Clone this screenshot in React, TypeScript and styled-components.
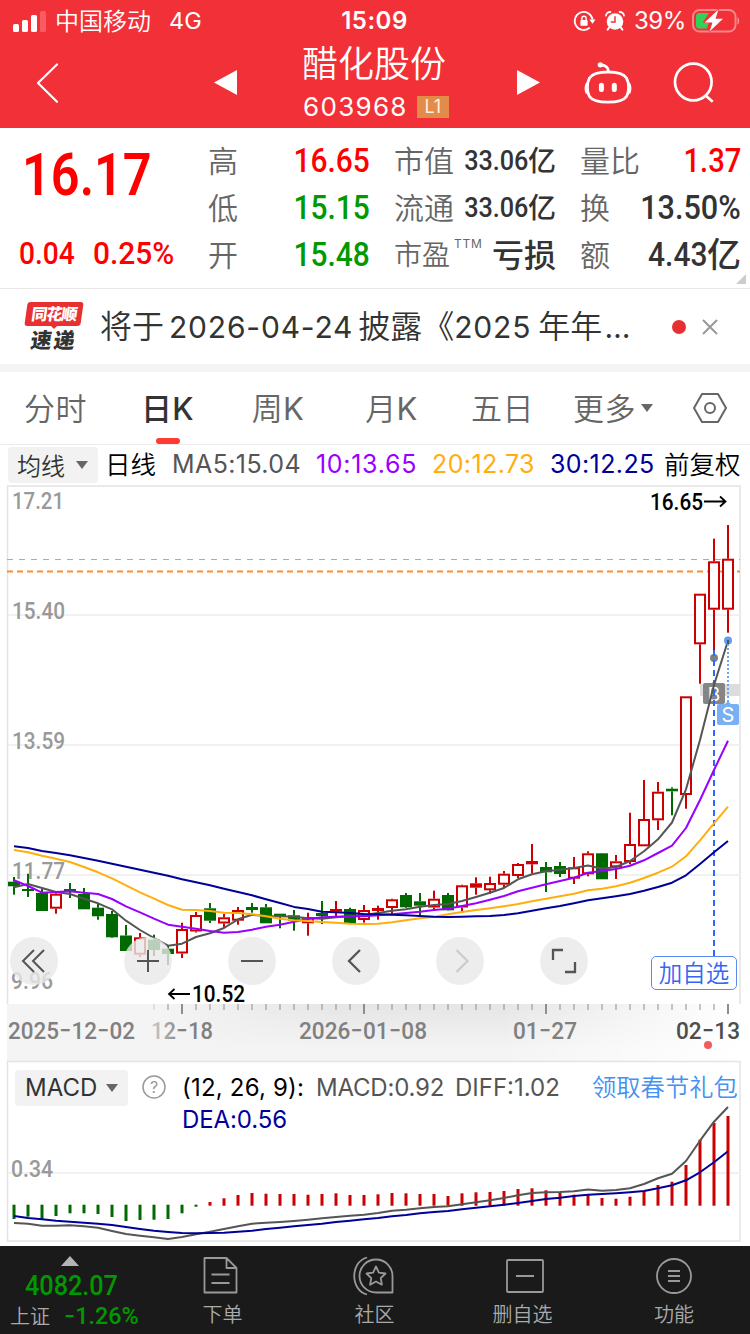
import React from "react";
import styled, { createGlobalStyle } from "styled-components";

const SANS = `Inter, "Noto Sans CJK SC", sans-serif`;
const CJK = `"Noto Sans CJK SC", Inter, sans-serif`;
const DIN = `Roboto, "Noto Sans CJK SC", sans-serif`;

const Global = createGlobalStyle`
  * { box-sizing: border-box; }
  body { margin: 0; background: #fff; font-family: ${SANS}; }
  svg { display: block; overflow: visible; }
  svg text { white-space: pre; }
`;

const Screen = styled.main`
  width: 750px;
  height: 1334px;
  overflow: hidden;
  display: flex;
  flex-direction: column;
  background: #fff;
`;

/* ---------- header ---------- */

const Header = styled.header`
  height: 128px;
  flex: none;
  background: #f23038;
  color: #fff;
`;

const StatusBar = styled.div`
  height: 40px;
  display: grid;
  grid-template-columns: 1fr auto 1fr;
  align-items: center;
  padding: 0 10px 0 13px;
`;

const StatusGroup = styled.div<{ $end?: boolean }>`
  display: flex;
  align-items: center;
  justify-content: ${(p) => (p.$end ? "flex-end" : "flex-start")};
`;

const Carrier = styled.span`
  height: 40px;
  margin-left: 9px;
  font: 350 24px/37px ${CJK};
`;

const Network = styled.span`
  margin-left: 18px;
  font: 400 23.5px/42px ${SANS};
`;

const Clock = styled.span`
  font: 600 24px/42px ${SANS};
  letter-spacing: 0.5px;
  margin-left: -4px;
`;

const Battery = styled.span`
  font: 400 24px/42px ${SANS};
  letter-spacing: -0.4px;
  margin: 0 6px 0 9px;
`;

const TitleBar = styled.div`
  height: 88px;
  display: grid;
  grid-template-columns: 214px 63px 198px 110px 1fr;
`;

const Slot = styled.div<{ $left?: number; $top?: number }>`
  padding: ${(p) => p.$top ?? 0}px 0 0 ${(p) => p.$left ?? 0}px;
`;

const StockName = styled.div`
  height: 46px;
  padding-right: 4px;
  font: 350 36px/42px ${CJK};
  text-align: center;
`;

const StockCode = styled.div`
  display: flex;
  align-items: center;
  padding-left: 26px;
  height: 42px;
  font: 400 26px/42px ${SANS};
  letter-spacing: 1.3px;
`;

const LevelTag = styled.span`
  width: 32px;
  height: 22px;
  margin-left: 9px;
  background: #e38b49;
  font: 400 18px/22px ${SANS};
  text-align: center;
  color: #fdf0e4;
  letter-spacing: 0;
`;

const HeaderActions = styled.div`
  display: flex;
  gap: 42px;
  padding-top: 21px;
`;

/* ---------- quote ---------- */

const Quote = styled.section`
  position: relative;
  height: 161px;
  flex: none;
  display: grid;
  grid-template-columns: 208px 186px 186px 161px;
  border-bottom: 1px solid #e8e8e8;
`;

const Num = styled.span<{ $size: number; $sx?: number; $origin?: string; $color?: string; $weight?: number }>`
  display: inline-block;
  font-family: ${DIN};
  font-size: ${(p) => p.$size}px;
  font-weight: ${(p) => p.$weight ?? 500};
  color: ${(p) => p.$color ?? "inherit"};
  transform: scaleX(${(p) => p.$sx ?? 0.88});
  transform-origin: ${(p) => p.$origin ?? "right"} center;
  white-space: nowrap;
`;

const PriceCol = styled.div`
  position: relative;
`;

const LastPrice = styled.div`
  padding: 18px 0 0 22px;
  line-height: 58px;
  height: 101px;
`;

const Change = styled.div`
  display: grid;
  grid-template-columns: 74px 1fr;
  padding-left: 19px;
  line-height: 48px;
`;

const StatCol = styled.dl<{ $width: number }>`
  margin: 0;
  padding-top: 9px;
  width: ${(p) => p.$width}px;
`;

const Stat = styled.div`
  height: 47px;
  display: flex;
  justify-content: space-between;
  align-items: center;
  line-height: 47px;
`;

const StatLabel = styled.dt<{ $size?: number }>`
  height: 47px;
  font: 350 ${(p) => p.$size ?? 30}px/45px ${CJK};
  color: #666;
  white-space: nowrap;
  sup {
    font: 400 12px/12px ${SANS};
    letter-spacing: 0.8px;
    vertical-align: 17px;
    margin-left: 4px;
  }
`;

const StatValue = styled.dd`
  margin: 0;
  display: flex;
  align-items: center;
  color: #333;
`;

const Hanzi = styled.span<{ $size: number }>`
  height: 47px;
  font: 500 ${(p) => p.$size}px/44px ${CJK};
`;

const Corner = styled.i`
  position: absolute;
  right: 4px;
  bottom: 4px;
  border-left: 10px solid transparent;
  border-bottom: 10px solid #ccc;
`;

/* ---------- news ---------- */

const News = styled.section`
  height: 83px;
  flex: none;
  display: flex;
  align-items: center;
  padding-left: 24px;
  border-bottom: 8px solid #f4f4f4;
`;

const NewsLogo = styled.div`
  width: 60px;
  height: 49px;
  display: flex;
  flex-direction: column;
  align-items: center;
`;

const LogoTop = styled.span`
  width: 56px;
  height: 24px;
  background: #e93030;
  border-radius: 3px;
  transform: skewX(-8deg);
  color: #fff;
  font: 900 16px/23px ${CJK};
  letter-spacing: -1px;
  text-align: center;
`;

const LogoArrow = styled.i`
  border: 3px solid transparent;
  border-top-color: #e93030;
  margin-bottom: -5px;
`;

const LogoBottom = styled.span`
  transform: skewX(-8deg);
  color: #333;
  font: 900 21px/24px ${CJK};
  letter-spacing: 2px;
`;

const NewsText = styled.p`
  margin: 0;
  padding: 0 0 2px 16px;
  width: 588px;
  white-space: nowrap;
  color: #333;
  font: 350 32px/46px ${CJK};
`;

const NewsDigits = styled.span<{ $gap?: number }>`
  font: 400 30px/46px ${SANS};
  margin: 0 ${(p) => p.$gap ?? 0}px;
  letter-spacing: 0.8px;
`;

const RedDot = styled.i<{ $size: number; $color?: string }>`
  display: block;
  width: ${(p) => p.$size}px;
  height: ${(p) => p.$size}px;
  border-radius: 50%;
  background: ${(p) => p.$color ?? "#e93030"};
`;

const CloseSlot = styled.span`
  margin-left: 16px;
`;

/* ---------- tabs ---------- */

const Tabs = styled.nav`
  height: 73px;
  flex: none;
  display: grid;
  grid-template-columns: 111px 113px 108px 119px 103px 120px 72px;
  border-bottom: 1px solid #ececec;
`;

const Tab = styled.div<{ $active?: boolean }>`
  display: flex;
  flex-direction: column;
  align-items: center;
  color: ${(p) => (p.$active ? "#333" : "#666")};
  font: ${(p) => (p.$active ? 500 : 350)} 31px/69px ${CJK};
  letter-spacing: 0.4px;
  white-space: nowrap;
  > span { height: 69px; }
  b {
    font-family: ${SANS};
    font-weight: ${(p) => (p.$active ? 500 : 400)};
  }
`;

const Underline = styled.i`
  width: 24px;
  height: 6px;
  flex: none;
  border-radius: 3px;
  background: #ff3b34;
  margin-top: -3px;
`;

const MoreTab = styled.div`
  height: 72px;
  display: flex;
  align-items: center;
  padding: 0 0 3px 19px;
  gap: 5px;
  color: #666;
  font: 350 31px/69px ${CJK};
  letter-spacing: 0.4px;
  i { margin-top: 2px; }
`;

const IconTab = styled.div`
  display: flex;
  align-items: center;
  justify-content: center;
  padding-bottom: 1px;
`;

const Caret = styled.i`
  border: 6px solid transparent;
  border-bottom: 0;
  border-top: 8px solid #666;
`;

/* ---------- moving averages ---------- */

const MaRow = styled.div`
  height: 40px;
  flex: none;
  display: grid;
  grid-template-columns: 97px 67px 144px 116px 118px 114px 79px;
  padding: 1px 0 0 8px;
`;

const Selector = styled.button<{ $width: number }>`
  width: ${(p) => p.$width}px;
  height: 36px;
  margin-top: 1px;
  padding: 0 10px 0 9px;
  border: 0;
  border-radius: 4px;
  background: #f2f2f2;
  color: #333;
  display: flex;
  align-items: center;
  justify-content: space-between;
  font: 350 24px/34px ${CJK};
  span { font-family: ${SANS}; font-weight: 400; line-height: 37px; padding-left: 1px; }
`;

const MaLabel = styled.span`
  height: 37px;
  font: 350 25.5px/33px ${CJK};
  color: #000;
  white-space: nowrap;
`;

const Reading = styled.span<{ $color: string; $ls?: number; $size?: number }>`
  font: 400 ${(p) => p.$size ?? 25}px/37px ${SANS};
  color: ${(p) => p.$color};
  letter-spacing: ${(p) => p.$ls ?? 0}px;
  white-space: pre;
`;

/* ---------- charts ---------- */

const Stack = styled.section<{ $height: number }>`
  height: ${(p) => p.$height}px;
  flex: none;
  display: grid;
  grid-template-columns: 750px;
  > * { grid-area: 1 / 1; }
`;

const Controls = styled.div`
  align-self: end;
  display: flex;
  padding: 0 0 19px 10px;
  z-index: 1;
`;

const RoundButton = styled.button<{ $gap: number }>`
  width: 48px;
  height: 48px;
  padding: 0;
  margin-right: ${(p) => p.$gap}px;
  border: 0;
  border-radius: 50%;
  background: rgba(232, 232, 232, 0.8);
  display: flex;
  align-items: center;
  justify-content: center;
`;

const WatchButton = styled.button`
  margin: 19px 0 -5px 63px;
  width: 86px;
  height: 34px;
  padding: 0 0 2px;
  border: 1.5px solid #5b8bf0;
  border-radius: 5px;
  background: #fff;
  color: #3366f5;
  font: 350 23.5px/29px ${CJK};
`;

const MacdHead = styled.div`
  display: grid;
  grid-template-columns: 127px 40px 134px 139px 138px 146px;
  grid-template-rows: 32px 32px;
  padding: 10px 0 0 15px;
  align-items: center;
  z-index: 1;
  white-space: nowrap;
`;

const GiftLink = styled.a`
  font: 350 24.3px/30px ${CJK};
  color: #4391f0;
  padding-bottom: 2px;
  margin-left: -1px;
`;

/* ---------- footer ---------- */

const Footer = styled.footer`
  height: 88px;
  flex: none;
  background: #1a1a1a;
  color: #aaa;
  display: grid;
  grid-template-columns: 148px 149px 155px 141px 162px;
  overflow: hidden;
`;

const IndexBox = styled.div`
  padding-top: 10px;
`;

const UpArrow = styled.i`
  display: block;
  width: 18px;
  margin-left: 61px;
  border: 9px solid transparent;
  border-top: 0;
  border-bottom: 10px solid #b4b4b4;
`;

const IndexValue = styled.div`
  padding: 3px 0 0 25px;
  height: 36px;
  line-height: 34px;
`;

const IndexRow = styled.div`
  display: grid;
  grid-template-columns: 54px 1fr;
  padding-left: 10px;
  font: 350 20px/28px ${CJK};
`;

const WideDash = styled.span`
  font: 500 25px/20px ${SANS};
`;

const FootItem = styled.div`
  display: flex;
  flex-direction: column;
  align-items: center;
  font: 350 20px/28px ${CJK};
  svg { margin: 8px 0 2px; }
`;

/* ---------- data: body top, body bottom, high, low, rising ---------- */

type Candle = [number, number, number, number, 0 | 1];

const candles: Candle[] = [
  [881.7, 886.3, 877, 894.7, 0], [889, 891, 873.7, 897, 0], [893, 911, 889, 911, 0], [893.7, 908.7, 893, 913.7, 1],
  [889, 891.5, 883, 898, 0], [894, 909.3, 888, 909.3, 0], [907.7, 916.3, 903, 919.7, 0], [914, 937.3, 911, 938, 0],
  [935.5, 951, 925, 951, 0], [937.3, 954.7, 933, 957, 1], [939.7, 950, 934.7, 956, 0], [948.7, 954, 945, 965, 0],
  [929, 953.5, 922.7, 958, 1], [915, 931.5, 912, 932.5, 1], [908.3, 920.7, 903, 923, 0], [917.3, 923.5, 914, 927, 1],
  [910, 920.7, 907, 924.7, 1], [907, 910, 903, 912.7, 0], [907.3, 923.3, 904, 923.3, 0], [913.7, 917, 913.7, 928.3, 0],
  [915.3, 920.7, 910, 930.7, 0], [917, 923.3, 912.7, 935.7, 1], [913, 916, 901, 924, 0], [909, 911.7, 901, 918, 1],
  [909, 923, 907.7, 923, 0], [910, 920, 905, 922.7, 1], [908, 911, 905.7, 919.7, 1], [899.3, 908, 898.7, 914, 1],
  [895, 907.3, 893, 908, 0], [901.3, 905.7, 893, 916.7, 0], [898.7, 907.5, 890.7, 909.7, 1], [895, 910.3, 893, 910.7, 0],
  [885.3, 907.5, 884.7, 912.7, 1], [883.3, 887.7, 877.3, 894.7, 1], [883, 890.3, 876.7, 894, 1], [873.7, 884.7, 871, 888, 1],
  [864, 876, 863, 878, 1], [861, 864.3, 844, 873.3, 1], [867, 872.3, 862, 892, 0], [866, 874, 862, 877, 0],
  [867.3, 878.7, 857, 884, 1], [853.3, 874.3, 851.3, 876.3, 1], [853.3, 879.3, 853, 879.3, 0], [861.3, 867.3, 855, 879, 1],
  [844, 862, 812.7, 864.3, 1], [819, 846.3, 780, 846, 1], [791.7, 820.3, 782, 830, 1], [788.7, 791.3, 787.3, 815.3, 0],
  [696.3, 795, 696.3, 808.7, 1], [593.7, 644.3, 593.7, 683.7, 1], [561.3, 609.7, 538.7, 650, 1], [558.7, 609.7, 525, 632.7, 1],
];

const ma5 = [887.3, 884, 888, 892, 894, 898.7, 903.3, 909.3, 920.7, 930, 938, 945.7, 943.7, 937, 933.3, 928, 919.3, 914.7, 916, 916.3, 916.8, 918.3, 918.7, 917.3, 916.3, 915, 913, 910.7, 909.3, 906.7, 905, 904, 901, 897, 892.7, 888, 879.3, 874.3, 871.3, 869.7, 868, 865.5, 868.8, 867, 861, 851.3, 839.3, 822.5, 789.3, 740, 685, 640.7];
const ma10 = [880.3, 886, 892.7, 892, 891.3, 892.7, 894, 899, 906.3, 912.3, 918.7, 924.7, 926.7, 928.7, 931, 932.7, 932, 929.7, 926.7, 924.7, 921.7, 919, 917.3, 916.7, 916.3, 916.3, 915.3, 914.3, 913, 911.7, 910, 908.7, 906, 903.3, 899.7, 896, 891.3, 887.7, 884.3, 881, 877.7, 872.7, 871, 869, 865.7, 860.3, 853, 845.7, 828, 800, 770, 740.7];
const ma20 = [850, 852.3, 855.7, 858.7, 862, 867, 872.3, 878.3, 885.3, 892.3, 898.7, 905, 909.7, 910, 911, 912.7, 913, 914.3, 916.3, 918.7, 920.3, 921, 922, 922.7, 923.7, 924, 923.7, 922.3, 920.3, 918.3, 916.7, 914.3, 912, 910, 908.3, 906.3, 904, 901.3, 898.7, 896.3, 893.7, 890.3, 888.7, 886.3, 882.7, 878, 872.7, 866.7, 856.3, 840.3, 823.3, 806.7];
const ma30 = [846.3, 848, 851, 853, 855.3, 858, 860.7, 863.7, 866.7, 869.7, 872.7, 875.7, 879.3, 882.3, 885.3, 888.7, 892, 895.3, 899.3, 903, 906.9, 909, 911.7, 912.3, 913, 914, 914.3, 914.7, 915.3, 916, 916.7, 917, 916.7, 916.3, 916, 915, 913.3, 910.7, 908.3, 906, 903.3, 900.3, 898.3, 896.3, 894, 890.7, 887, 882.7, 875.3, 864, 852.3, 841];

const macdBars = [1219, 1216.7, 1219, 1216, 1213.3, 1213.3, 1214, 1217, 1221, 1220, 1219.7, 1219, 1213.3, 1206.7, 1202, 1198.3, 1195, 1193, 1193.7, 1194, 1194, 1194.7, 1194, 1193.3, 1195, 1195, 1194.3, 1193, 1193.3, 1194, 1194, 1196, 1193.3, 1192.3, 1192, 1191, 1189, 1188.3, 1190.3, 1192.7, 1194.7, 1194.3, 1198, 1198.7, 1196.7, 1191, 1185, 1181.7, 1165, 1139.7, 1123, 1116];
const diff = [1223, 1223.7, 1225.7, 1225.7, 1225.3, 1226.3, 1227.7, 1231, 1234, 1235.7, 1237.3, 1239, 1237, 1234.3, 1231.7, 1229, 1226.3, 1223.7, 1222.7, 1222, 1221, 1219.7, 1218.3, 1217, 1215.8, 1214.8, 1213, 1210.7, 1209.7, 1208.3, 1207, 1206.3, 1204.3, 1202.3, 1200.3, 1198, 1195.3, 1193, 1192.3, 1192, 1191.3, 1189.5, 1190.7, 1190, 1188.3, 1184, 1178.3, 1173.7, 1161, 1140.7, 1121.7, 1107];
const dea = [1216, 1218, 1219.3, 1220.7, 1221.7, 1222.7, 1223.7, 1225, 1227, 1229, 1230.7, 1232, 1233, 1233.3, 1233, 1232.7, 1231.7, 1230.7, 1229, 1227.7, 1226.3, 1225, 1223.7, 1222, 1220.7, 1219.3, 1218, 1216.3, 1215, 1213.3, 1212, 1211, 1209.3, 1207.7, 1206.3, 1204.7, 1203, 1201, 1199, 1197.7, 1196, 1194.7, 1194, 1193.3, 1192.3, 1191, 1188.3, 1185.3, 1180.3, 1172.3, 1162.3, 1151.3];

const xAt = (i: number) => 14 + 14 * i;
const toPoints = (ys: number[]) => ys.map((y, i) => `${xAt(i)},${y}`).join(" ");

const RED = "#cc0000";
const GREEN = "#006a00";

const Line = ({ ys, color }: { ys: number[]; color: string }) => (
  <polyline points={toPoints(ys)} fill="none" stroke={color} strokeWidth={2} strokeLinejoin="round" />
);

const ChartText = ({ x, y, w, size = 23, color = "#999", weight = 500, children }: {
  x: number; y: number; w: number; size?: number; color?: string; weight?: number; children: string;
}) => (
  <text x={x} y={y} textLength={w} lengthAdjust="spacingAndGlyphs" fontFamily={DIN} fontSize={size} fontWeight={weight} fill={color}>
    {children.split(/(-)/).map((part, i) =>
      part === "-" ? (
        <tspan key={i} fontFamily={SANS} fontSize={size * 1.22} fontWeight={400}>-</tspan>
      ) : (
        part
      )
    )}
  </text>
);

const Candles = () => (
  <g>
    {candles.map(([top, bottom, high, low, up], i) => {
      const x = xAt(i);
      const color = up ? RED : GREEN;
      const h = bottom - top;
      return (
        <g key={i}>
          <rect x={x - 1} y={high} width={2} height={Math.max(0, top - high)} fill={color} />
          <rect x={x - 1} y={bottom} width={2} height={Math.max(0, low - bottom)} fill={color} />
          {up && h > 4.5 ? (
            <rect x={x - 5} y={top + 1} width={10} height={h - 2} fill="#fff" stroke={color} strokeWidth={2} />
          ) : (
            <rect x={x - 6} y={top} width={12} height={h} fill={color} />
          )}
        </g>
      );
    })}
  </g>
);

const KChart = () => (
  <svg width="750" height="519" viewBox="0 485 750 519">
    <path d="M7.5 1004V486H740V1004" fill="none" stroke="#e4e4e4" strokeWidth="1.6" />
    <path d="M8 615H740M8 745H740M8 875H740" stroke="#f1f1f1" strokeWidth="2" />
    <ChartText x={12} y={509} w={52}>17.21</ChartText>
    <ChartText x={12} y={619} w={53}>15.40</ChartText>
    <ChartText x={12} y={749} w={53}>13.59</ChartText>
    <ChartText x={12} y={879} w={53}>11.77</ChartText>
    <ChartText x={11} y={989} w={42}>9.96</ChartText>
    <path d="M7 559.5H740" stroke="#cfa673" strokeWidth="1" strokeDasharray="6 6" />
    <path d="M7 571.5H740" stroke="#ff8b2b" strokeWidth="2" strokeDasharray="6 4" />
    <Candles />
    <rect x="700" y="684" width="40" height="12" fill="#dcdcdc" />
    <circle cx="714" cy="658" r="4" fill="#808080" />
    <path d="M714 681l4 4h-8z" fill="#858585" />
    <rect x="703" y="683" width="22" height="21" rx="2" fill="#858585" />
    <text x="714" y="701" textAnchor="middle" fontFamily={SANS} fontSize="19" fill="#fff">B</text>
    <path d="M714 650V956" stroke="#3068ff" strokeWidth="2" strokeDasharray="6 4" />
    <Line ys={ma5} color="#555" />
    <Line ys={ma10} color="#9900ff" />
    <Line ys={ma20} color="#ffae0d" />
    <Line ys={ma30} color="#000099" />
    <path d="M728 644V702" stroke="#6aa6f0" strokeWidth="2" strokeDasharray="2 2" />
    <circle cx="728" cy="640.5" r="4" fill="#5b9df0" />
    <path d="M728 640V644" stroke="#555" strokeWidth="2" />
    <path d="M728 701l4 4h-8z" fill="#7ab0f2" />
    <rect x="717" y="704" width="22" height="21" rx="2" fill="#7ab0f2" />
    <text x="728" y="722" textAnchor="middle" fontFamily={SANS} fontSize="20" fill="#fff">S</text>
    <ChartText x={650} y={510} w={53} color="#000">16.65</ChartText>
    <path d="M704 501.5H725M720 496.5L725.5 501.5L720 506.5" fill="none" stroke="#000" strokeWidth="1.8" />
    <ChartText x={192} y={1002} w={53} color="#000">10.52</ChartText>
    <path d="M190 994H169M174.5 989L169 994L174.5 999" fill="none" stroke="#000" strokeWidth="1.8" />
  </svg>
);

const ticks = Array.from({ length: 42 }, (_, k) => 154 + 14 * k);

const DateAxis = () => (
  <svg width="750" height="57" viewBox="0 1004 750 57">
    <defs>
      <linearGradient id="axisV" x1="0" y1="0" x2="0" y2="1">
        <stop offset="0" stopColor="#e5e5e5" />
        <stop offset="0.8" stopColor="#f4f4f4" />
      </linearGradient>
      <linearGradient id="axisL" x1="0" y1="0" x2="1" y2="0">
        <stop offset="0.45" stopColor="#f4f4f4" />
        <stop offset="1" stopColor="#f4f4f4" stopOpacity="0" />
      </linearGradient>
      <linearGradient id="axisR" x1="0" y1="0" x2="1" y2="0">
        <stop offset="0" stopColor="#fff" stopOpacity="0" />
        <stop offset="1" stopColor="#fff" />
      </linearGradient>
      <linearGradient id="dateFade" gradientUnits="userSpaceOnUse" x1="148" y1="0" x2="182" y2="0">
        <stop offset="0" stopColor="#d4d4d4" />
        <stop offset="1" stopColor="#808080" />
      </linearGradient>
    </defs>
    <rect x="7" y="1004" width="733" height="57" fill="url(#axisV)" />
    <rect x="500" y="1004" width="240" height="57" fill="url(#axisR)" />
    <rect x="7" y="1004" width="330" height="57" fill="url(#axisL)" />
    {ticks.map((x) => {
      const major = (x - 182) % 182 === 0;
      return (
        <rect key={x} x={x - (major ? 1 : 0.5)} y={1004} width={major ? 2 : 1} height={major ? 10 : 6} fill={x === 154 ? "#ccc" : "#8e8e8e"} />
      );
    })}
    <ChartText x={151} y={1039} w={62} color="url(#dateFade)">12-18</ChartText>
    <ChartText x={8} y={1039} w={127} color="#808080">2025-12-02</ChartText>
    <ChartText x={299} y={1039} w={128} color="#808080">2026-01-08</ChartText>
    <ChartText x={513} y={1039} w={64} color="#808080">01-27</ChartText>
    <ChartText x={676} y={1039} w={64} color="#4d4d4d">02-13</ChartText>
    <circle cx="708" cy="1045" r="4" fill="#f35b5b" />
  </svg>
);

const MacdChart = () => (
  <svg width="750" height="185" viewBox="0 1061 750 185">
    <rect x="7.5" y="1061.5" width="732.5" height="179.5" fill="none" stroke="#e4e4e4" strokeWidth="1.5" />
    <path d="M8 1173H740" stroke="#f1f1f1" strokeWidth="2" />
    <ChartText x={11} y={1177} w={42}>0.34</ChartText>
    {macdBars.map((y, i) =>
      i <= 13 ? (
        <rect key={i} x={xAt(i) - 1.5} y={1204.7} width={3} height={y - 1204.7} fill={GREEN} />
      ) : (
        <rect key={i} x={xAt(i) - 1.5} y={y} width={3} height={1205.7 - y} fill={RED} />
      )
    )}
    <Line ys={diff} color="#555" />
    <Line ys={dea} color="#000099" />
  </svg>
);

/* ---------- icons ---------- */

const Signal = () => (
  <svg width="33" height="21" viewBox="0 0 33 21" fill="#fff">
    <rect x="0" y="13" width="6" height="8" rx="1.5" />
    <rect x="9" y="9" width="6" height="12" rx="1.5" />
    <rect x="18" y="4" width="6" height="17" rx="1.5" />
    <rect x="27" y="0" width="6" height="21" rx="1.5" opacity="0.22" />
  </svg>
);

const RotationLock = () => (
  <svg width="22" height="22" viewBox="0 0 22 22" fill="none" stroke="#fff" strokeWidth="1.8">
    <path d="M15.8 17.6A9 9 0 1 1 18.6 9.5" />
    <path d="M15.3 9.6h6.2l-3 4.2z" fill="#fff" stroke="none" />
    <rect x="6.4" y="10" width="7.2" height="5.8" rx="0.8" fill="#fff" stroke="none" />
    <path d="M7.9 10.5V8.4a2.1 2.1 0 0 1 4.2 0v2.1" strokeWidth="1.4" />
  </svg>
);

const Alarm = () => (
  <svg width="20" height="20" viewBox="0 0 20 20">
    <circle cx="10" cy="10.5" r="8.3" fill="#fff" />
    <path d="M1 4.6A4 4 0 0 1 5.4 1M14.6 1A4 4 0 0 1 19 4.6" fill="none" stroke="#fff" strokeWidth="1.8" strokeLinecap="round" />
    <path d="M4.5 16.2L2.6 18.6M15.5 16.2L17.4 18.6" stroke="#fff" strokeWidth="2" strokeLinecap="round" />
    <path d="M10 5.2V11H5.8" fill="none" stroke="#f23038" strokeWidth="1.5" />
  </svg>
);

const BatteryIcon = () => (
  <svg width="48" height="24" viewBox="0 0 48 24">
    <rect x="1" y="1" width="42.5" height="21.5" rx="6.5" fill="none" stroke="#fff" strokeOpacity="0.42" strokeWidth="2" />
    <path d="M45.5 8.2c2.2 1 2.2 6.2 0 7.2z" fill="#fff" opacity="0.5" />
    <path d="M7.5 4H17L11 13H17L15 19.5H7.5A3.5 3.5 0 0 1 4 16V7.5A3.5 3.5 0 0 1 7.5 4z" fill="#34d158" />
    <path d="M26.5 0.5L12.5 13.5H20.5L17.5 22.5L31 9.8H23.5z" fill="#fff" stroke="#f23038" strokeWidth="1.2" paintOrder="stroke" />
  </svg>
);

const Robot = () => (
  <svg width="46" height="44" viewBox="585 61 46 44" fill="none" stroke="#fff" strokeWidth="2.8">
    <path d="M608 72C618 72 623.5 73.3 626.5 78C629.3 83 629.3 92 626.5 96.5C623.5 101 618 102.2 608 102.2S592.5 101 589.5 96.5C586.7 92 586.7 83 589.5 78C592.5 73.3 598 72 608 72z" />
    <path d="M608.5 71.5C608.5 67.5 605.5 65 600.5 65" strokeLinecap="round" />
    <circle cx="600.3" cy="64.8" r="2.6" fill="#fff" stroke="none" />
    <path d="M587.2 83.5C585.8 86 585.8 90.5 587.2 93.5M628.8 83.5C630.2 86 630.2 90.5 628.8 93.5" />
    <path d="M601.4 85.2V89.6M614.3 85.2V89.6" strokeWidth="5" strokeLinecap="round" />
  </svg>
);

const Search = () => (
  <svg width="42" height="42" viewBox="673 61 42 42" fill="none" stroke="#fff" strokeWidth="2.7">
    <circle cx="693.3" cy="82" r="18.3" />
    <path d="M705.3 95.3L712.7 101.7" />
  </svg>
);

const G = "#555";

export default function App() {
  return (
    <>
      <Global />
      <Screen>
        <Header>
          <StatusBar>
            <StatusGroup>
              <Signal />
              <Carrier>中国移动</Carrier>
              <Network>4G</Network>
            </StatusGroup>
            <Clock>15:09</Clock>
            <StatusGroup $end>
              <RotationLock />
              <Slot $left={9}><Alarm /></Slot>
              <Battery>39%</Battery>
              <BatteryIcon />
            </StatusGroup>
          </StatusBar>
          <TitleBar>
            <Slot $left={36} $top={23}>
              <svg width="24" height="40" viewBox="36 63 24 40"><path d="M57 64.5L38 83L57 101.7" fill="none" stroke="#fff" strokeWidth="2.2" strokeLinecap="round" strokeLinejoin="round" /></svg>
            </Slot>
            <Slot $top={30}>
              <svg width="24" height="26"><path d="M0 12.5L23 0V25z" fill="#fff" /></svg>
            </Slot>
            <div>
              <StockName>醋化股份</StockName>
              <StockCode>603968<LevelTag>L1</LevelTag></StockCode>
            </div>
            <Slot $left={42} $top={30}>
              <svg width="24" height="26"><path d="M23 12.5L0 0V25z" fill="#fff" /></svg>
            </Slot>
            <HeaderActions>
              <Robot />
              <Search />
            </HeaderActions>
          </TitleBar>
        </Header>

        <Quote>
          <PriceCol>
            <LastPrice><Num $size={59} $weight={600} $sx={0.855} $origin="left" $color="#f00">16.17</Num></LastPrice>
            <Change>
              <Num $size={32} $origin="left" $color="#f00">0.04</Num>
              <Num $size={32} $sx={0.935} $origin="left" $color="#f00">0.25%</Num>
            </Change>
          </PriceCol>
          <StatCol $width={162}>
            <Stat><StatLabel>高</StatLabel><StatValue><Num $size={34} $color="#f00">16.65</Num></StatValue></Stat>
            <Stat><StatLabel>低</StatLabel><StatValue><Num $size={34} $color="#090">15.15</Num></StatValue></Stat>
            <Stat><StatLabel>开</StatLabel><StatValue><Num $size={34} $color="#090">15.48</Num></StatValue></Stat>
          </StatCol>
          <StatCol $width={162}>
            <Stat><StatLabel>市值</StatLabel><StatValue><Num $size={28} $sx={0.9}>33.06</Num><Hanzi $size={28}>亿</Hanzi></StatValue></Stat>
            <Stat><StatLabel>流通</StatLabel><StatValue><Num $size={28} $sx={0.9}>33.06</Num><Hanzi $size={28}>亿</Hanzi></StatValue></Stat>
            <Stat><StatLabel $size={28}>市盈<sup>TTM</sup></StatLabel><StatValue><Hanzi $size={32}>亏损</Hanzi></StatValue></Stat>
          </StatCol>
          <StatCol $width={161}>
            <Stat><StatLabel>量比</StatLabel><StatValue><Num $size={34} $sx={0.86} $color="#f00">1.37</Num></StatValue></Stat>
            <Stat><StatLabel>换</StatLabel><StatValue><Num $size={34} $sx={0.9}>13.50%</Num></StatValue></Stat>
            <Stat><StatLabel>额</StatLabel><StatValue><Num $size={34}>4.43</Num><Hanzi $size={34}>亿</Hanzi></StatValue></Stat>
          </StatCol>
          <Corner />
        </Quote>

        <News>
          <NewsLogo>
            <LogoTop>同花顺</LogoTop>
            <LogoArrow />
            <LogoBottom>速递</LogoBottom>
          </NewsLogo>
          <NewsText>
            将于<NewsDigits $gap={5}>2026-04-24</NewsDigits>披露《<NewsDigits>2025</NewsDigits> 年年<NewsDigits $gap={2}>…</NewsDigits>
          </NewsText>
          <RedDot $size={14} />
          <CloseSlot>
            <svg width="16" height="16"><path d="M1 1L15 15M15 1L1 15" stroke="#999" strokeWidth="2" /></svg>
          </CloseSlot>
        </News>

        <Tabs>
          <Tab>分时</Tab>
          <Tab $active><span>日<b>K</b></span><Underline /></Tab>
          <Tab><span>周<b>K</b></span></Tab>
          <Tab><span>月<b>K</b></span></Tab>
          <Tab>五日</Tab>
          <MoreTab>更多<Caret /></MoreTab>
          <IconTab>
            <svg width="34" height="32" viewBox="0 0 34 32" fill="none" stroke="#666" strokeWidth="2">
              <path d="M9 2H25L33 16L25 30H9L1 16z" strokeLinejoin="round" />
              <circle cx="17" cy="16" r="5" />
            </svg>
          </IconTab>
        </Tabs>

        <MaRow>
          <Selector $width={90}>均线<Caret /></Selector>
          <MaLabel>日线</MaLabel>
          <Reading $color="#555" $ls={0.4}>MA5:15.04</Reading>
          <Reading $color="#9900ff" $ls={0.7}>10:13.65</Reading>
          <Reading $color="#ffae0d" $ls={0.4}>20:12.73</Reading>
          <Reading $color="#000099" $ls={0.4}>30:12.25</Reading>
          <MaLabel>前复权</MaLabel>
        </MaRow>

        <Stack $height={519}>
          <KChart />
          <Controls>
            <RoundButton $gap={66}>
              <svg width="24" height="24" fill="none" stroke={G} strokeWidth="2"><path d="M12 1L1 12L12 23M22 1L11 12L22 23" /></svg>
            </RoundButton>
            <RoundButton $gap={56}>
              <svg width="24" height="24" stroke={G} strokeWidth="2"><path d="M1 12H23M12 1V23" /></svg>
            </RoundButton>
            <RoundButton $gap={56}>
              <svg width="24" height="24" stroke={G} strokeWidth="2"><path d="M1 12H23" /></svg>
            </RoundButton>
            <RoundButton $gap={56}>
              <svg width="24" height="24" fill="none" stroke={G} strokeWidth="2.3"><path d="M16 1L5 12L16 23" /></svg>
            </RoundButton>
            <RoundButton $gap={56}>
              <svg width="24" height="24" fill="none" stroke="#ccc" strokeWidth="2.3"><path d="M8.5 1L19.5 12L8.5 23" /></svg>
            </RoundButton>
            <RoundButton $gap={0}>
              <svg width="24" height="24" fill="none" stroke={G} strokeWidth="2.3"><path d="M11 1H1V11M13 23H23V13" /></svg>
            </RoundButton>
            <WatchButton>加自选</WatchButton>
          </Controls>
        </Stack>

        <DateAxis />

        <Stack $height={185}>
          <MacdChart />
          <MacdHead>
            <Selector $width={113}><span>MACD</span><Caret /></Selector>
            <svg width="24" height="24" viewBox="0 0 24 24">
              <circle cx="12" cy="12" r="11" fill="none" stroke="#999" strokeWidth="1.5" />
              <text x="12" y="18" textAnchor="middle" fontFamily={SANS} fontSize="16" fill="#999">?</text>
            </svg>
            <Reading $color="#000" $size={24} $ls={0.2}>(12, 26, 9):</Reading>
            <Reading $color="#555" $size={24} $ls={-0.2}>MACD:0.92</Reading>
            <Reading $color="#555" $size={24}>DIFF:1.02</Reading>
            <GiftLink>领取春节礼包</GiftLink>
            <span />
            <span />
            <Reading $color="#000099" $size={24} $ls={-0.1}>DEA:0.56</Reading>
          </MacdHead>
        </Stack>

        <Footer>
          <IndexBox>
            <UpArrow />
            <IndexValue><Num $size={28} $sx={0.9} $origin="left" $color="#090">4082.07</Num></IndexValue>
            <IndexRow>上证<Num $size={24} $sx={0.97} $origin="left" $color="#090"><WideDash>-</WideDash>1.26%</Num></IndexRow>
          </IndexBox>
          <FootItem>
            <svg width="40" height="44" viewBox="202.5 1254 40 44" fill="none" stroke="#999" strokeWidth="1.8">
              <path d="M205 1258H226L236 1268V1292.5H204V1258zM226 1258V1268H236M211 1274.5H229M211 1283H229" strokeLinejoin="round" />
            </svg>
            下单
          </FootItem>
          <FootItem>
            <svg width="44" height="44" viewBox="353 1254 44 44" fill="none" stroke="#999" strokeWidth="1.8">
              <path d="M376 1259.5A16.5 16.5 0 1 0 376 1292.5H392.5V1276A16.5 16.5 0 0 0 376 1259.5z" strokeLinejoin="round" />
              <path d="M367 1257.5C350 1262 350 1290 367 1294.5" />
              <path d="M376 1266.5L378.9 1272.6L385.5 1273.5L380.7 1278.1L381.9 1284.7L376 1281.5L370.1 1284.7L371.3 1278.1L366.5 1273.5L373.1 1272.6z" strokeLinejoin="round" />
            </svg>
            社区
          </FootItem>
          <FootItem>
            <svg width="40" height="44" viewBox="503 1254 40 44" fill="none" stroke="#999" strokeWidth="1.8">
              <rect x="507" y="1260" width="36" height="32" rx="1" />
              <path d="M516 1276H534" strokeWidth="2" />
            </svg>
            删自选
          </FootItem>
          <FootItem>
            <svg width="40" height="44" viewBox="654 1254 40 44" fill="none" stroke="#999" strokeWidth="1.8">
              <circle cx="674" cy="1276" r="17" />
              <path d="M668 1271H680M668 1276H680M668 1281H680" strokeWidth="2" />
            </svg>
            功能
          </FootItem>
        </Footer>
      </Screen>
    </>
  );
}
